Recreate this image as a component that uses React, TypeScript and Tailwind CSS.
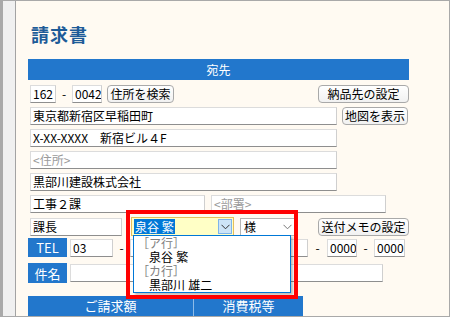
import type { ReactNode } from "react";

const font = { fontFamily: '"Noto Sans CJK JP", "Noto Sans", sans-serif' };
const listFont = { fontFamily: '"Liberation Sans", "Noto Sans CJK JP", sans-serif' };

function Field({
  w,
  children,
  placeholder,
  className = "",
}: {
  w: string;
  children?: ReactNode;
  placeholder?: string;
  className?: string;
}) {
  return (
    <div
      className={`${w} flex h-[18px] shrink-0 items-center overflow-hidden whitespace-nowrap border border-[#dcdcdc] border-b-[#8e8e8e] border-r-[#cfcfcf] bg-white px-[2px] text-[12px] leading-[16px] text-black ${className}`}
    >
      {children ?? <span className="text-[#9a9a9a]">{placeholder}</span>}
    </div>
  );
}

function Btn({ w, children, className = "" }: { w: string; children: ReactNode; className?: string }) {
  return (
    <div
      className={`${w} flex h-[18px] shrink-0 items-center justify-center whitespace-nowrap rounded-[4px] border border-[#a9a9a9] bg-gradient-to-b from-white to-[#f1f1f1] text-[12px] leading-[16px] text-black ${className}`}
    >
      {children}
    </div>
  );
}

function Chevron({ color = "#555" }: { color?: string }) {
  return (
    <svg width="9" height="6" viewBox="0 0 9 6" fill="none">
      <path d="M0.5 0.8 L4.5 4.8 L8.5 0.8" stroke={color} strokeWidth="1" />
    </svg>
  );
}

function Label({ h, children }: { h: string; children: ReactNode }) {
  return (
    <div
      className={`${h} flex w-[39px] shrink-0 items-center justify-center bg-[#2277cc] text-[13px] leading-none text-white`}
    >
      {children}
    </div>
  );
}

export default function App() {
  return (
    <div
      className="relative flex h-[317px] w-[450px] overflow-hidden bg-[#a9a9a9] pb-px pl-[3px] pr-px pt-px"
      style={font}
    >
      <div className="w-[13px] shrink-0 border-r border-[#a3a3a3] bg-[#f0f0f0]" />
      <div className="flex flex-1 flex-col bg-[#fffaf2] pl-[12px]">
        <div className="flex h-[58px] items-start pl-[3px] pt-[22px]">
          <h1 className="text-[18px] font-bold leading-[22px] tracking-[1px] text-[#1d5b98]">請求書</h1>
        </div>

        <div className="flex h-[21px] w-[381px] items-center justify-center bg-[#2277cc] text-[12px] text-white">
          宛先
        </div>

        <div className="mt-[5px] flex w-[381px] flex-col gap-[4px] pl-[2px]">
          <div className="flex items-center">
            <Field w="w-[26px]">162</Field>
            <span className="w-[16px] text-center text-[12px]">-</span>
            <Field w="w-[30px]">0042</Field>
            <Btn w="w-[67px]" className="ml-[5px]">住所を検索</Btn>
            <Btn w="w-[91px]" className="ml-auto">納品先の設定</Btn>
          </div>
          <div className="flex items-center">
            <Field w="w-[307px]">東京都新宿区早稲田町</Field>
            <Btn w="w-[66px]" className="ml-[5px]">地図を表示</Btn>
          </div>
          <Field w="w-[307px]">X-XX-XXXX　新宿ビル４F</Field>
          <Field w="w-[307px]" placeholder="<住所>" />
          <Field w="w-[307px]">黒部川建設株式会社</Field>
          <div className="flex items-center gap-[6px]">
            <Field w="w-[175px]">工事２課</Field>
            <Field w="w-[175px]" placeholder="<部署>" />
          </div>
          <div className="flex items-center">
            <Field w="w-[92px]">課長</Field>
            <div className="ml-[9px] flex h-[19px] w-[103px] shrink-0 border border-[#e4bf5c] bg-[#ffffc6] p-px">
              <div className="flex flex-1 items-center pl-[1px]">
                <span className="bg-[#0078d7] px-[1px] text-[12px] leading-[15px] text-white">泉谷 繁</span>
              </div>
              <div className="flex w-[14px] items-center justify-center border border-[#7eb4ea] bg-[#cce4f7]">
                <Chevron color="#333" />
              </div>
            </div>
            <div className="ml-[6px] flex h-[18px] w-[57px] shrink-0 items-center justify-between border border-[#b5b5b5] bg-white pl-[3px] pr-[4px] text-[12px]">
              <span>様</span>
              <Chevron color="#777" />
            </div>
            <Btn w="w-[91px]" className="ml-auto">送付メモの設定</Btn>
          </div>
        </div>

        <div className="mt-[2px] flex h-[19px] items-center">
          <Label h="h-[19px]">TEL</Label>
          <Field w="w-[43px]" className="ml-[3px]">03</Field>
          <span className="w-[17px] text-center text-[12px]">-</span>
          <Field w="w-[43px]" />
          <Field w="w-[43px]" className="ml-[92px]" />
          <span className="w-[19px] text-center text-[12px]">-</span>
          <Field w="w-[30px]">0000</Field>
          <span className="w-[17px] text-center text-[12px]">-</span>
          <Field w="w-[31px]">0000</Field>
        </div>

        <div className="mt-[6px] flex h-[20px] items-center">
          <Label h="h-[20px]">件名</Label>
          <Field w="w-[313px]" className="ml-[3px]" />
        </div>

        <div className="mt-[13px] flex h-[20px] w-[275px] text-[13px] text-white">
          <div className="flex w-[165px] items-center justify-center bg-[#2277cc]">ご請求額</div>
          <div className="w-px bg-[#8dbbe8]" />
          <div className="flex w-[109px] items-center justify-center bg-[#2277cc]">消費税等</div>
        </div>
      </div>

      <div
        className="absolute left-[133px] top-[235px] flex h-[58px] w-[158px] flex-col border border-[#0078d7] bg-white pt-px text-[12px] leading-[14px] shadow-[2px_2px_2px_rgba(0,0,0,0.25)]"
        style={listFont}
      >
        <div className="h-[14px] pl-[3px] text-[#808080]">［ア行］</div>
        <div className="h-[14px] pl-[15px] text-black">泉谷 繁</div>
        <div className="h-[14px] pl-[3px] text-[#808080]">［カ行］</div>
        <div className="h-[14px] pl-[15px] text-black">黒部川 雄二</div>
      </div>

      <div className="pointer-events-none absolute left-[126px] top-[210px] h-[89px] w-[172px] border-4 border-[#ff0000]" />
    </div>
  );
}
